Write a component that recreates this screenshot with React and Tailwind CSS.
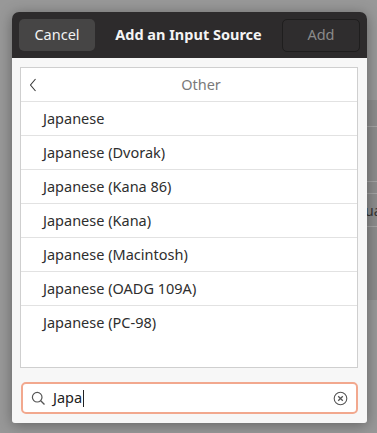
const layouts = [
  'Japanese',
  'Japanese (Dvorak)',
  'Japanese (Kana 86)',
  'Japanese (Kana)',
  'Japanese (Macintosh)',
  'Japanese (OADG 109A)',
  'Japanese (PC-98)',
]

function BackArrow() {
  return (
    <svg width="8" height="14" viewBox="0 0 8 14" fill="none">
      <path d="M6.5 1 L1.5 7 L6.5 13" stroke="#3a3a3a" strokeWidth="1.1" />
    </svg>
  )
}

function SearchIcon() {
  return (
    <svg width="15" height="15" viewBox="0 0 15 15" fill="none">
      <circle cx="6.2" cy="6.2" r="4.8" stroke="#555" strokeWidth="1.2" />
      <path d="M9.7 9.7 L13.5 13.5" stroke="#555" strokeWidth="1.3" />
    </svg>
  )
}

function ClearIcon() {
  return (
    <svg width="15" height="15" viewBox="0 0 15 15" fill="none">
      <circle cx="7.5" cy="7.5" r="6.3" stroke="#555" strokeWidth="1.1" />
      <path d="M5.2 5.2 L9.8 9.8 M9.8 5.2 L5.2 9.8" stroke="#555" strokeWidth="1.3" />
    </svg>
  )
}

export default function App() {
  return (
    <div className="relative w-[377px] h-[433px] overflow-hidden bg-[#989898] pt-[12px] pl-[12px] font-['Noto_Sans','Open_Sans',sans-serif]">
      {/* window behind the dialog */}
      <div className="absolute right-0 top-[100px] w-[12px] h-[200px] bg-[#8c8c8c]">
        <div className="h-[27px] border-b border-[#a4a4a4]" />
        <div className="h-[55px] border-b border-[#a4a4a4]" />
        <div className="h-[12px] border-b border-[#a4a4a4]" />
        <div className="h-[33px] border-b border-[#a4a4a4] overflow-hidden text-[14px] leading-[33px] text-[#333]">ua</div>
      </div>

      <div className="relative flex flex-col w-[355px] h-[411px] rounded-t-[7px] rounded-b-[3px] overflow-hidden shadow-[0_2px_14px_rgba(0,0,0,0.35)]">
        <header className="flex h-[46px] shrink-0 items-center justify-between bg-[#2d2b2c] px-[7px]">
          <button className="h-[32px] w-[76px] rounded-[5px] bg-[#464545] text-[14.5px] text-[#f2f2f2]">
            Cancel
          </button>
          <span className="text-[14.5px] font-bold text-[#f4f4f4]">Add an Input Source</span>
          <button className="h-[33px] w-[78px] rounded-[5px] border border-[#1f1e1e] bg-[#2f2d2e] text-[14.5px] text-[#8a8a8a]">
            Add
          </button>
        </header>

        <div className="flex flex-1 flex-col bg-[#f7f7f7] pl-[8px] pr-[9px] pt-[9px]">
          <div className="flex h-[301px] flex-col border border-[#cfcfcf] bg-white">
            <div className="flex h-[34px] shrink-0 items-center border-b border-[#e2e2e2] pl-[8px]">
              <BackArrow />
              <span className="flex-1 pl-[8px] text-center text-[14.5px] text-[#7a7a7a]">Other</span>
            </div>
            {layouts.map((name, i) => (
              <div
                key={name}
                className={`flex h-[34px] shrink-0 items-center pl-[22px] text-[14.5px] text-[#2e2e2e] ${
                  i < layouts.length - 1 ? 'border-b border-[#e2e2e2]' : ''
                }`}
              >
                {name}
              </div>
            ))}
          </div>

          <div className="mt-[14px] ml-[1px] flex h-[32px] items-center rounded-[5px] border-2 border-[#f2a88e] bg-white pl-[8px] pr-[8px]">
            <SearchIcon />
            <div className="ml-[7px] flex flex-1 items-center text-[14.5px] text-[#222]">
              <span>Japa</span>
              <span className="ml-[1px] h-[17px] w-px bg-[#222]" />
            </div>
            <ClearIcon />
          </div>
        </div>
      </div>
    </div>
  )
}
